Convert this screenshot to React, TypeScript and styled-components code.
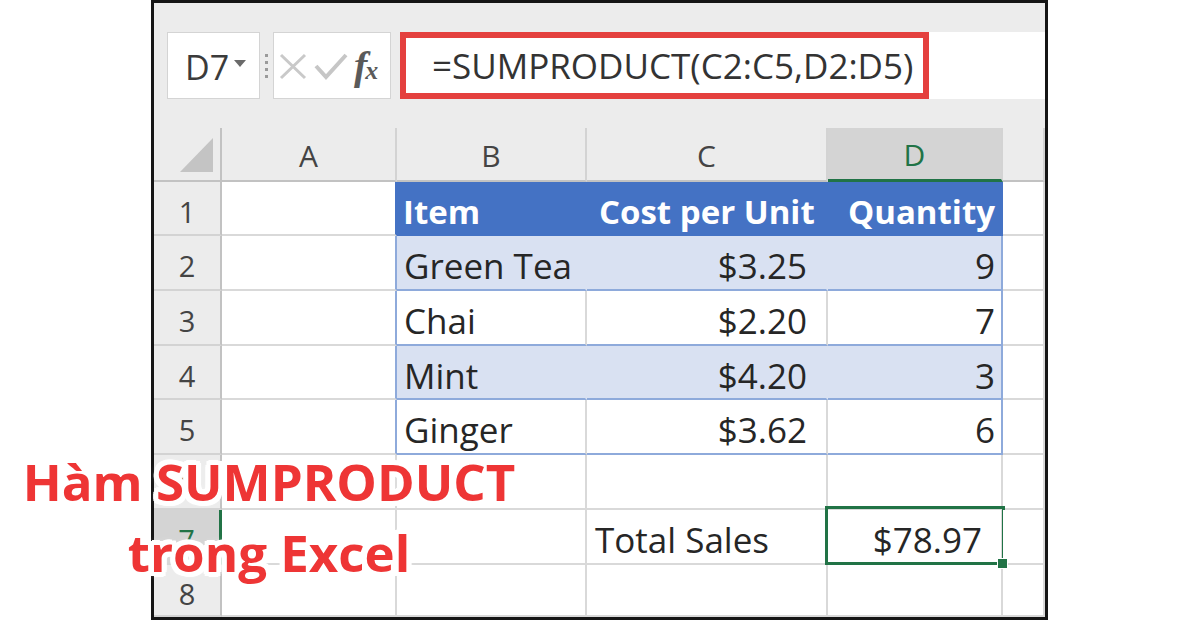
import React from "react";
import styled, { createGlobalStyle } from "styled-components";

const GlobalStyle = createGlobalStyle`
  html, body {
    margin: 0;
    padding: 0;
    background: #fff;
  }
  body {
    font-family: "Open Sans", "Noto Sans", sans-serif;
  }
`;

const GRID = "#d9d9d9";
const TABLE_LINE = "#8eaadb";
const HEAD_BLUE = "#4472c4";
const BAND = "#d9e1f2";
const EXCEL_GREEN = "#217346";

const Page = styled.div`
  position: relative;
  width: 1200px;
  height: 620px;
  overflow: hidden;
  background: #fff;
`;

const Frame = styled.div`
  margin-left: 151px;
  width: 897px;
  height: 620px;
  box-sizing: border-box;
  border: 3px solid #151515;
  display: flex;
  flex-direction: column;
  background: #ececec;
`;

const FormulaBar = styled.div`
  height: 125px;
  flex-shrink: 0;
  box-sizing: border-box;
  padding: 29px 0 0 13px;
  display: flex;
  align-items: flex-start;
`;

const NameBox = styled.div`
  width: 93px;
  height: 67px;
  box-sizing: border-box;
  background: #fff;
  border: 1px solid #d4d4d4;
  display: flex;
  align-items: center;
  padding: 2px 0 0 17px;
  gap: 5px;
  font-size: 34px;
  color: #3b3b3b;
`;

const Caret = styled.span`
  width: 0;
  height: 0;
  margin-top: -6px;
  border-left: 6px solid transparent;
  border-right: 6px solid transparent;
  border-top: 7px solid #6a6a6a;
`;

const Grip = styled.div`
  width: 13px;
  height: 67px;
  display: flex;
  flex-direction: column;
  align-items: center;
  justify-content: center;
  gap: 4px;
`;

const GripDot = styled.span`
  width: 3px;
  height: 3px;
  background: #9a9a9a;
`;

const FnBox = styled.div`
  width: 118px;
  height: 67px;
  box-sizing: border-box;
  background: #fff;
  border: 1px solid #d4d4d4;
  display: flex;
  align-items: center;
  padding-left: 4px;
  gap: 4px;
`;

const FxLabel = styled.span`
  font-family: "Liberation Serif", "DejaVu Serif", serif;
  font-style: italic;
  font-weight: 700;
  font-size: 40px;
  line-height: 1;
  color: #5a5a5a;
  margin-left: 2px;
  letter-spacing: -2px;

  small {
    font-size: 26px;
  }
`;

const FormulaField = styled.div`
  flex: 1;
  margin-left: 9px;
  height: 67px;
  background: #fff;
  display: flex;
`;

const FormulaHighlight = styled.div`
  width: 529px;
  height: 67px;
  box-sizing: border-box;
  border: 6px solid #e4403e;
  display: flex;
  align-items: center;
  padding-left: 26px;
  font-size: 35px;
  color: #333;
  white-space: nowrap;
`;

const Sheet = styled.div`
  flex: 1;
  display: grid;
  grid-template-columns: 68px 175px 190px 241px 175px 1fr;
  grid-template-rows: 54px 54px 55px 55px 54px 55px 55px 55px 1fr;
  background: #fff;
`;

const Corner = styled.div`
  background: #ececec;
  border-right: 2px solid #c2c2c2;
  border-bottom: 2px solid #c2c2c2;
`;

const ColHeader = styled.div<{ $active?: boolean }>`
  box-sizing: border-box;
  display: flex;
  align-items: center;
  justify-content: center;
  padding-top: 2px;
  font-size: 30px;
  background: ${(p) => (p.$active ? "#d4d4d4" : "#ececec")};
  color: ${(p) => (p.$active ? EXCEL_GREEN : "#444")};
  border-right: 2px solid #d3d3d3;
  border-bottom: ${(p) => (p.$active ? `3px solid ${EXCEL_GREEN}` : "2px solid #c2c2c2")};
`;

const RowHeader = styled.div<{ $active?: boolean }>`
  box-sizing: border-box;
  display: flex;
  align-items: center;
  justify-content: center;
  padding-top: 6px;
  font-size: 29px;
  background: ${(p) => (p.$active ? "#d4d4d4" : "#ececec")};
  color: ${(p) => (p.$active ? EXCEL_GREEN : "#444")};
  border-right: ${(p) => (p.$active ? `3px solid ${EXCEL_GREEN}` : "2px solid #c2c2c2")};
  border-bottom: 2px solid #d3d3d3;
`;

const Cell = styled.div<{
  $bg: string;
  $right: string;
  $bottom: string;
  $align: "left" | "right";
  $pad: number;
  $bold?: boolean;
  $selected?: boolean;
}>`
  position: relative;
  box-sizing: border-box;
  display: flex;
  align-items: center;
  justify-content: ${(p) => (p.$align === "right" ? "flex-end" : "flex-start")};
  padding: 6px ${(p) => (p.$align === "right" ? p.$pad : 0)}px 0
    ${(p) => (p.$align === "left" ? p.$pad : 0)}px;
  background: ${(p) => p.$bg};
  border-right: 2px solid ${(p) => p.$right};
  border-bottom: 2px solid ${(p) => p.$bottom};
  font-size: ${(p) => (p.$bold ? 33 : 35)}px;
  font-weight: ${(p) => (p.$bold ? 700 : 400)};
  color: ${(p) => (p.$bold ? "#fff" : "#262626")};
  white-space: nowrap;

  ${(p) =>
    p.$selected &&
    `
    &::after {
      content: "";
      position: absolute;
      top: -4px;
      left: -3px;
      right: -4px;
      bottom: -2px;
      border: 3px solid ${EXCEL_GREEN};
    }
    &::before {
      content: "";
      position: absolute;
      right: -7px;
      bottom: -6px;
      width: 9px;
      height: 9px;
      background: ${EXCEL_GREEN};
      border: 1px solid #fff;
      z-index: 1;
    }
  `}
`;

const Title = styled.div`
  position: absolute;
  left: 0;
  top: 446px;
  width: 538px;
  text-align: center;
  font-family: "Open Sans", "Noto Sans", sans-serif;
  font-weight: 700;
  font-size: 51px;
  line-height: 71px;
  color: #ee3535;
  text-shadow: -4px -4px 0 #fff, 4px -4px 0 #fff, -4px 4px 0 #fff, 4px 4px 0 #fff,
    0 -5px 0 #fff, 0 5px 0 #fff, -5px 0 0 #fff, 5px 0 0 #fff, -2px -5px 0 #fff,
    2px 5px 0 #fff, -5px 2px 0 #fff, 5px -2px 0 #fff, 0 0 8px #fff;
`;

type Kind = "head" | "band" | "plain" | "none";

type RowData = {
  n: number;
  kind: Kind;
  cells: string[];
  selected?: number;
};

const rows: RowData[] = [
  { n: 1, kind: "head", cells: ["", "Item", "Cost per Unit", "Quantity", ""] },
  { n: 2, kind: "band", cells: ["", "Green Tea", "$3.25", "9", ""] },
  { n: 3, kind: "plain", cells: ["", "Chai", "$2.20", "7", ""] },
  { n: 4, kind: "band", cells: ["", "Mint", "$4.20", "3", ""] },
  { n: 5, kind: "plain", cells: ["", "Ginger", "$3.62", "6", ""] },
  { n: 6, kind: "none", cells: ["", "", "", "", ""] },
  { n: 7, kind: "none", cells: ["", "", "Total Sales", "$78.97", ""], selected: 3 },
  { n: 8, kind: "none", cells: ["", "", "", "", ""] },
];

const columns = ["A", "B", "C", "D", ""];

function cellLook(row: RowData, col: number) {
  const inTable = row.kind !== "none" && col >= 1 && col <= 3;
  let bg = "#fff";
  let right = GRID;
  let bottom = GRID;
  let align: "left" | "right" = "left";
  let pad = 8;

  if (inTable) {
    if (row.kind === "head") {
      bg = HEAD_BLUE;
      right = HEAD_BLUE;
      bottom = HEAD_BLUE;
    } else {
      bg = row.kind === "band" ? BAND : "#fff";
      right = row.kind === "band" ? BAND : GRID;
      bottom = TABLE_LINE;
    }
    if (col === 3) right = row.kind === "head" ? HEAD_BLUE : TABLE_LINE;
  }
  if (row.kind !== "none" && col === 0) {
    right = row.kind === "head" ? HEAD_BLUE : TABLE_LINE;
  }

  if (col === 1) pad = row.kind === "head" ? 6 : 7;
  if (col === 2) {
    if (row.kind === "head") pad = 12;
    else if (row.kind === "none") pad = 8;
    else {
      align = "right";
      pad = 19;
    }
  }
  if (col === 3) {
    align = "right";
    pad = row.kind === "none" ? 19 : 6;
  }

  return { bg, right, bottom, align, pad };
}

function XIcon() {
  return (
    <svg width="32" height="28" viewBox="0 0 32 28">
      <path d="M3 3 L27 26 M27 3 L3 26" stroke="#c9c9c9" strokeWidth="3" fill="none" />
    </svg>
  );
}

function CheckIcon() {
  return (
    <svg width="34" height="28" viewBox="0 0 34 28">
      <path d="M2 14 L12 25 L32 3" stroke="#c6c6c6" strokeWidth="4" fill="none" />
    </svg>
  );
}

function SelectAllMark() {
  return (
    <svg width="66" height="52" viewBox="0 0 66 52">
      <polygon points="59,10 59,44 26,44" fill="#c4c4c4" />
    </svg>
  );
}

export default function App() {
  return (
    <Page>
      <GlobalStyle />
      <Frame>
        <FormulaBar>
          <NameBox>
            D7
            <Caret />
          </NameBox>
          <Grip>
            <GripDot />
            <GripDot />
            <GripDot />
            <GripDot />
          </Grip>
          <FnBox>
            <XIcon />
            <CheckIcon />
            <FxLabel>
              f<small>x</small>
            </FxLabel>
          </FnBox>
          <FormulaField>
            <FormulaHighlight>=SUMPRODUCT(C2:C5,D2:D5)</FormulaHighlight>
          </FormulaField>
        </FormulaBar>

        <Sheet>
          <Corner>
            <SelectAllMark />
          </Corner>
          {columns.map((c, i) => (
            <ColHeader key={`h${i}`} $active={c === "D"}>
              {c}
            </ColHeader>
          ))}
          {rows.map((row) => (
            <React.Fragment key={row.n}>
              <RowHeader $active={row.n === 7}>{row.n}</RowHeader>
              {row.cells.map((text, col) => {
                const look = cellLook(row, col);
                return (
                  <Cell
                    key={col}
                    $bg={look.bg}
                    $right={look.right}
                    $bottom={look.bottom}
                    $align={look.align}
                    $pad={look.pad}
                    $bold={row.kind === "head" && col >= 1 && col <= 3}
                    $selected={row.selected === col}
                  >
                    {text}
                  </Cell>
                );
              })}
            </React.Fragment>
          ))}
        </Sheet>
      </Frame>
      <Title>
        Hàm SUMPRODUCT
        <br />
        trong Excel
      </Title>
    </Page>
  );
}
